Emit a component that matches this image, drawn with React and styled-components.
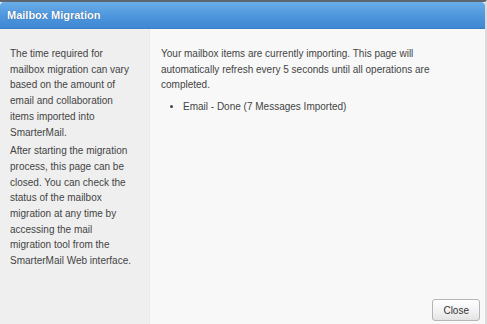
import React from "react";
import styled, { createGlobalStyle } from "styled-components";

const Global = createGlobalStyle`
  html, body { margin: 0; padding: 0; background: #ffffff; }
  body { font-family: "Liberation Sans", Arial, sans-serif; }
  #root { width: 487px; height: 324px; }
`;

const Window = styled.div`
  width: 487px;
  height: 324px;
  box-sizing: border-box;
  display: flex;
  flex-direction: column;
  background: #f8f8f8;
  border-top: 2px solid #5d6670;
  border-right: 2px solid #dcdcdc;
  overflow: hidden;
`;

const Header = styled.div`
  height: 26px;
  display: flex;
  align-items: center;
  padding: 0 7px;
  background: linear-gradient(to bottom, #6aaee8 0%, #4d95dc 55%, #3f88d3 100%);
  border-radius: 4px 4px 0 0;
  border-bottom: 1px solid #3a7fc6;
  color: #ffffff;
  font-size: 11px;
  font-weight: bold;
  text-shadow: 0 0 1px rgba(0, 40, 90, 0.6);
`;

const Body = styled.div`
  flex: 1;
  display: flex;
  min-height: 0;
`;

const Sidebar = styled.div`
  width: 150px;
  box-sizing: border-box;
  padding: 17px 16px 0 10px;
  background: #efefef;
  border-right: 1px solid #e9e9e9;
  color: #444444;
  font-size: 10px;
  line-height: 15.7px;
`;

const Para = styled.p`
  margin: 0 0 3px 0;
`;

const Main = styled.div`
  flex: 1;
  display: flex;
  flex-direction: column;
  padding: 17px 5px 3px 11px;
  color: #444444;
  font-size: 10px;
  line-height: 15.7px;
`;

const Message = styled.p`
  margin: 0 0 6px 0;
  max-width: 290px;
`;

const List = styled.ul`
  margin: 0;
  padding: 0 0 0 22px;
  list-style: disc;
`;

const Footer = styled.div`
  margin-top: auto;
  display: flex;
  justify-content: flex-end;
`;

const Button = styled.button`
  height: 22px;
  padding: 0 10px;
  font-family: "Liberation Sans", Arial, sans-serif;
  font-size: 10px;
  color: #333;
  border: 1px solid #b5b5b5;
  border-radius: 3px;
  background: linear-gradient(to bottom, #ffffff 0%, #f1f1f1 60%, #e3e3e3 100%);
  box-shadow: inset 0 1px 0 #fff;
`;

export default function App() {
  return (
    <>
      <Global />
      <Window>
        <Header>Mailbox Migration</Header>
        <Body>
          <Sidebar>
            <Para>
              The time required for mailbox migration can vary based on the
              amount of email and collaboration items imported into
              SmarterMail.
            </Para>
            <Para>
              After starting the migration process, this page can be closed.
              You can check the status of the mailbox migration at any time by
              accessing the mail migration tool from the SmarterMail Web
              interface.
            </Para>
          </Sidebar>
          <Main>
            <Message>
              Your mailbox items are currently importing. This page will
              automatically refresh every 5 seconds until all operations are
              completed.
            </Message>
            <List>
              <li>Email - Done (7 Messages Imported)</li>
            </List>
            <Footer>
              <Button>Close</Button>
            </Footer>
          </Main>
        </Body>
      </Window>
    </>
  );
}
